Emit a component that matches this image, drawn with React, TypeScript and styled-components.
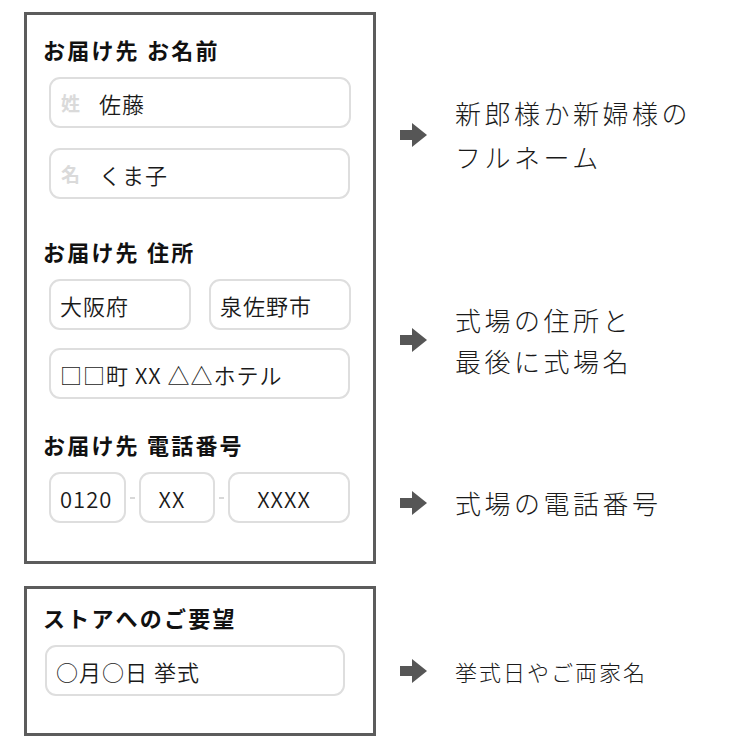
import React from "react";
import styled, { createGlobalStyle } from "styled-components";

const GlobalStyle = createGlobalStyle`
  html, body {
    margin: 0;
    padding: 0;
    background: #ffffff;
  }
  body {
    font-family: "Noto Sans CJK JP", "Noto Sans", sans-serif;
    color: #111111;
  }
`;

const Page = styled.div`
  width: 750px;
  height: 750px;
  padding: 12px 0 0 24px;
  box-sizing: border-box;
  display: flex;
  flex-direction: column;
  gap: 22px;
`;

const Row = styled.div`
  display: flex;
  align-items: flex-start;
`;

const Panel = styled.div<{ $pad: string }>`
  width: 352px;
  box-sizing: border-box;
  border: 3px solid #5c5c5c;
  padding: ${(p) => p.$pad};
  display: flex;
  flex-direction: column;
`;

const Section = styled.section<{ $mt?: number }>`
  margin-top: ${(p) => p.$mt ?? 0}px;
  display: flex;
  flex-direction: column;
`;

const Heading = styled.h2`
  margin: 0 0 13px;
  font-size: 22px;
  line-height: 30px;
  font-weight: 700;
  letter-spacing: 2.2px;
  color: #111;
`;

const Fields = styled.div<{ $gap: number; $indent: number }>`
  display: flex;
  flex-direction: column;
  gap: ${(p) => p.$gap}px;
  margin-left: ${(p) => p.$indent}px;
`;

const FieldRow = styled.div<{ $gap: number }>`
  display: flex;
  align-items: center;
  gap: ${(p) => p.$gap}px;
`;

const Field = styled.div<{ $w?: number; $center?: boolean }>`
  box-sizing: border-box;
  width: ${(p) => (p.$w ? `${p.$w}px` : "100%")};
  height: 51px;
  border: 2px solid #dedede;
  border-radius: 11px;
  display: flex;
  align-items: center;
  justify-content: ${(p) => (p.$center ? "center" : "flex-start")};
  padding: ${(p) => (p.$center ? "0 10px 0 0" : "0 0 0 9px")};
  font-size: 22px;
  letter-spacing: 1px;
  font-weight: 350;
  color: #1a1a1a;
  white-space: nowrap;
`;

const FieldTag = styled.span`
  color: #dadada;
  font-weight: 700;
  font-size: 19px;
  margin: 0 18px 0 1px;
`;

const Dash = styled.span`
  width: 5px;
  height: 2px;
  background: #d8d8d8;
  flex: none;
`;

const Notes = styled.div`
  display: flex;
  flex-direction: column;
  margin-left: 24px;
`;

const Note = styled.div<{ $h: number; $pt?: number }>`
  box-sizing: border-box;
  height: ${(p) => p.$h}px;
  padding-top: ${(p) => p.$pt ?? 0}px;
  display: flex;
  align-items: center;
`;

const NoteText = styled.p<{ $size: number; $lh: number; $ls: number }>`
  margin: 0 0 0 28px;
  font-size: ${(p) => p.$size}px;
  line-height: ${(p) => p.$lh}px;
  letter-spacing: ${(p) => p.$ls}px;
  font-weight: 300;
  color: #1a1a1a;
`;

const Arrow = () => (
  <svg width="27" height="24" viewBox="0 0 27 24" style={{ flex: "none" }}>
    <rect x="0" y="7" width="14" height="10" fill="#565656" />
    <polygon points="12,0 27,12 12,24" fill="#565656" />
  </svg>
);

export default function App() {
  return (
    <>
      <GlobalStyle />
      <Page>
        <Row>
          <Panel $pad="19px 16px 38px 16px">
            <Section>
              <Heading>お届け先 お名前</Heading>
              <Fields $gap={20} $indent={6}>
                <Field $w={302}>
                  <FieldTag>姓</FieldTag>佐藤
                </Field>
                <Field $w={301}>
                  <FieldTag>名</FieldTag>くま子
                </Field>
              </Fields>
            </Section>

            <Section $mt={37}>
              <Heading>お届け先 住所</Heading>
              <Fields $gap={18} $indent={6}>
                <FieldRow $gap={18}>
                  <Field $w={142}>大阪府</Field>
                  <Field $w={142}>泉佐野市</Field>
                </FieldRow>
                <Field $w={301}>□□町 XX △△ホテル</Field>
              </Fields>
            </Section>

            <Section $mt={30}>
              <Heading>お届け先 電話番号</Heading>
              <Fields $gap={0} $indent={6}>
                <FieldRow $gap={4}>
                  <Field $w={77}>0120</Field>
                  <Dash />
                  <Field $w={76} $center>
                    XX
                  </Field>
                  <Dash />
                  <Field $w={122} $center>
                    XXXX
                  </Field>
                </FieldRow>
              </Fields>
            </Section>
          </Panel>

          <Notes>
            <Note $h={246}>
              <Arrow />
              <NoteText $size={26} $lh={44} $ls={3.5}>
                新郎様か新婦様の
                <br />
                フルネーム
              </NoteText>
            </Note>
            <Note $h={164}>
              <Arrow />
              <NoteText $size={26} $lh={41} $ls={3.5}>
                式場の住所と
                <br />
                最後に式場名
              </NoteText>
            </Note>
            <Note $h={141} $pt={20}>
              <Arrow />
              <NoteText $size={26} $lh={40} $ls={3.5}>
                式場の電話番号
              </NoteText>
            </Note>
          </Notes>
        </Row>

        <Row>
          <Panel $pad="13px 28px 37px 16px">
            <Section>
              <Heading>ストアへのご要望</Heading>
              <Fields $gap={0} $indent={2}>
                <Field $w={300}>○月○日 挙式</Field>
              </Fields>
            </Section>
          </Panel>

          <Notes>
            <Note $h={150} $pt={20}>
              <Arrow />
              <NoteText $size={22} $lh={32} $ls={2}>
                挙式日やご両家名
              </NoteText>
            </Note>
          </Notes>
        </Row>
      </Page>
    </>
  );
}
